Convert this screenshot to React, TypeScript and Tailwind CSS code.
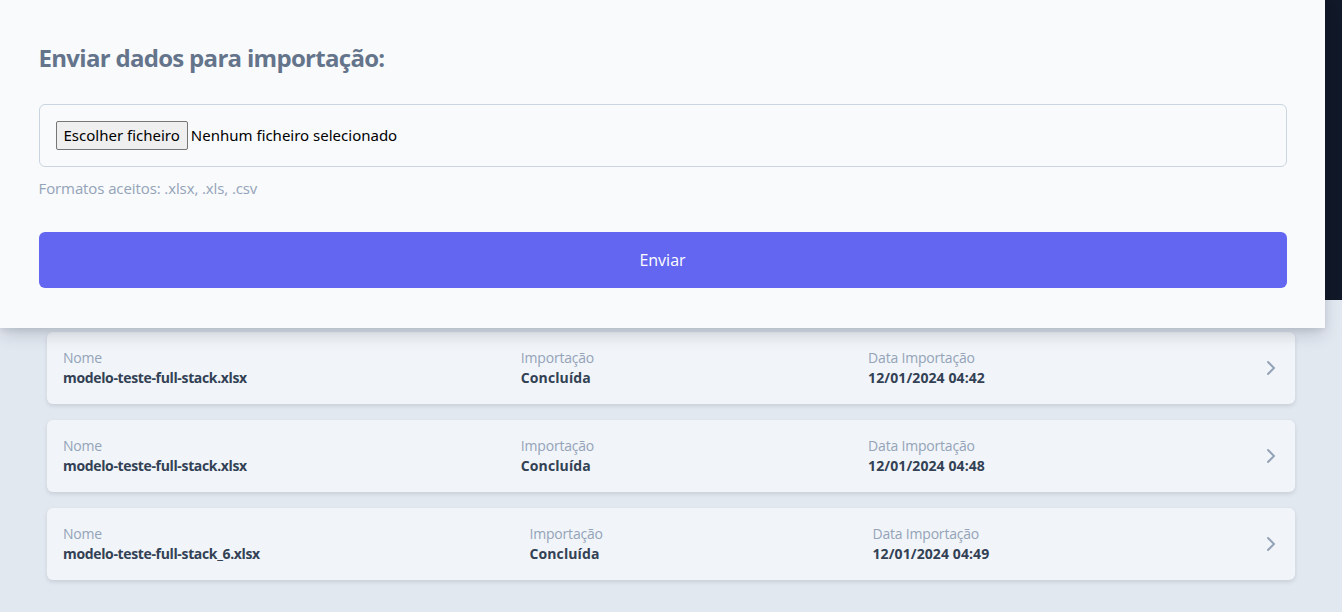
import React from "react";
import { ChevronRight } from "lucide-react";

const rows = [
  { nome: "modelo-teste-full-stack.xlsx", status: "Concluída", data: "12/01/2024 04:42" },
  { nome: "modelo-teste-full-stack.xlsx", status: "Concluída", data: "12/01/2024 04:48" },
  { nome: "modelo-teste-full-stack_6.xlsx", status: "Concluída", data: "12/01/2024 04:49" },
];

function Field({ label, value, tight }: { label: string; value: string; tight?: boolean }) {
  return (
    <div className="flex flex-col">
      <span className="text-sm leading-5 text-[#94a3b8] tracking-[-0.2px]">{label}</span>
      <span
        className={
          tight
            ? "text-sm leading-5 font-bold text-[#334155] tracking-[-0.35px]"
            : "text-sm leading-5 font-bold text-[#334155] tracking-[0.1px]"
        }
      >
        {value}
      </span>
    </div>
  );
}

export default function App() {
  return (
    <div className="min-h-screen bg-[#e2e8f0] font-['Open_Sans',sans-serif]">
      <div className="flex items-start">
        <div className="relative z-10 w-[1325px] bg-[#f8fafc] shadow-[0_8px_16px_-2px_rgba(15,23,42,0.18),0_2px_6px_rgba(15,23,42,0.08)]">
          <div className="mx-auto w-[1248px] pt-[42px] pb-10">
            <h2 className="text-2xl leading-8 font-bold text-[#64748b] tracking-[-0.7px]">Enviar dados para importação:</h2>
            <div className="mt-[30px] rounded-md border border-[#cbd5e1] p-4">
              <div className="flex items-center h-[29px] font-['Noto_Sans',sans-serif] text-[15px] text-black">
                <span className="h-[29px] flex items-center rounded-[2px] border border-[#767676] bg-[#efefef] px-[7px]">
                  Escolher ficheiro
                </span>
                <span className="ml-[3px]">Nenhum ficheiro selecionado</span>
              </div>
            </div>
            <p className="mt-[9px] text-[15px] leading-6 text-[#94a3b8] tracking-[-0.1px]">Formatos aceitos: .xlsx, .xls, .csv</p>
            <button className="mt-8 flex h-14 w-full items-center justify-center rounded-md bg-[#6366f1] text-base text-white">
              Enviar
            </button>
          </div>
        </div>
        <div className="h-[300px] flex-1 bg-[#111827]" />
      </div>
      <div className="mx-auto mt-1 flex w-[1248px] flex-col gap-4 pb-8">
        {rows.map((r, i) => (
          <div
            key={i}
            className="flex items-center justify-between rounded-md bg-[#f1f5f9] py-4 pl-4 pr-3 shadow-[0_2px_4px_rgba(15,23,42,0.12)]"
          >
            <Field label="Nome" value={r.nome} tight />
            <Field label="Importação" value={r.status} />
            <Field label="Data Importação" value={r.data} />
            <ChevronRight className="h-6 w-6 text-[#94a3b8]" strokeWidth={2} />
          </div>
        ))}
      </div>
    </div>
  );
}
